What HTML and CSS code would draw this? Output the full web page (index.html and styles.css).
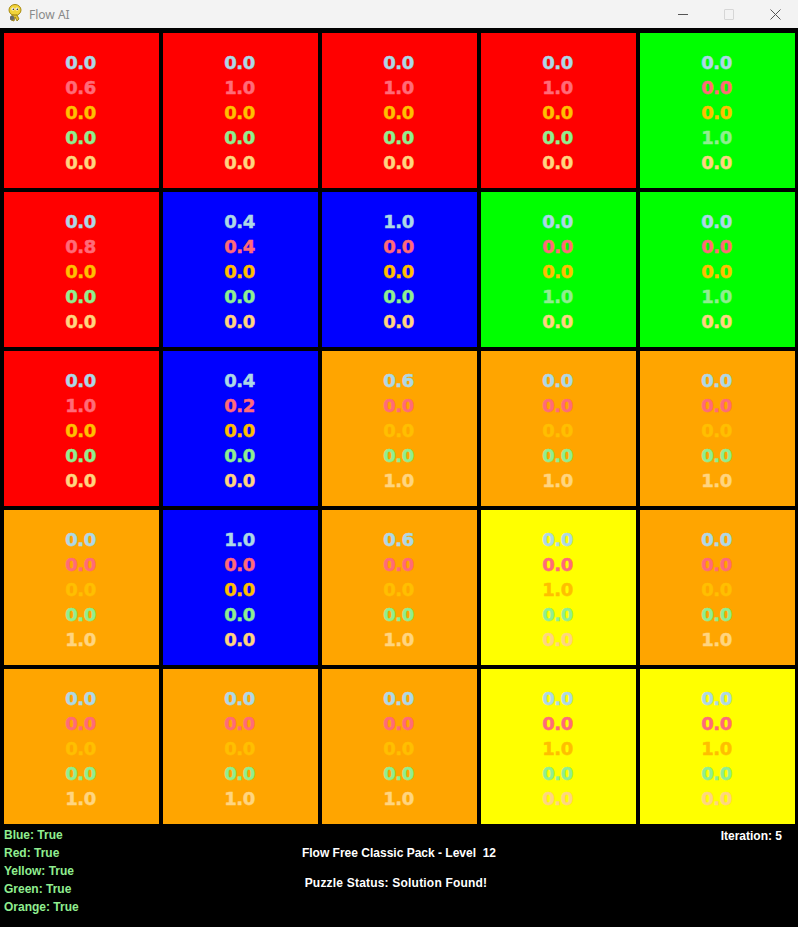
FILE: index.html
```html
<!DOCTYPE html>
<html lang="en">
  <head>
    <meta charset="UTF-8" />
    <meta name="viewport" content="width=device-width, initial-scale=1.0" />
    <title>Flow AI</title>
    <link rel="stylesheet" href="styles.css">
  </head>

  <body>
    <div class="titlebar">
      <svg class="app-icon" width="16" height="18" viewBox="0 0 16 18">
        <ellipse cx="8" cy="6" rx="6" ry="5.5" fill="#f2d33a" stroke="#a88a10" stroke-width="1" />
        <circle cx="6" cy="5" r="1.6" fill="#fff" />
        <circle cx="10" cy="5" r="1.6" fill="#fff" />
        <circle cx="6.3" cy="5.2" r="0.8" fill="#222" />
        <circle cx="10.3" cy="5.2" r="0.8" fill="#222" />
        <path d="M5 11 L4 16 L7 17 L8 13 L10 17 L12 15 L10 11 Z" fill="#e2c12e" stroke="#8a7010" stroke-width="0.8" />
        <rect x="3" y="12" width="4" height="4" rx="1" fill="#6a6a6a" />
      </svg>
      <span class="title">Flow AI</span>
      <div class="controls">
        <span class="ctl min"></span>
        <span class="ctl max"></span>
        <span class="ctl close">
          <svg width="11" height="11" viewBox="0 0 11 11">
            <path d="M0.5 0.5 L10.5 10.5 M10.5 0.5 L0.5 10.5" stroke="#555" stroke-width="1" />
          </svg>
        </span>
      </div>
    </div>

    <div class="board">
      <!-- row 1 -->
      <div class="cell red">
        <span class="c-blue">0.0</span><span class="c-red">0.6</span><span class="c-yellow">0.0</span><span class="c-green">0.0</span><span class="c-orange">0.0</span>
      </div>
      <div class="cell red">
        <span class="c-blue">0.0</span><span class="c-red">1.0</span><span class="c-yellow">0.0</span><span class="c-green">0.0</span><span class="c-orange">0.0</span>
      </div>
      <div class="cell red">
        <span class="c-blue">0.0</span><span class="c-red">1.0</span><span class="c-yellow">0.0</span><span class="c-green">0.0</span><span class="c-orange">0.0</span>
      </div>
      <div class="cell red">
        <span class="c-blue">0.0</span><span class="c-red">1.0</span><span class="c-yellow">0.0</span><span class="c-green">0.0</span><span class="c-orange">0.0</span>
      </div>
      <div class="cell green">
        <span class="c-blue">0.0</span><span class="c-red">0.0</span><span class="c-yellow">0.0</span><span class="c-green">1.0</span><span class="c-orange">0.0</span>
      </div>

      <!-- row 2 -->
      <div class="cell red">
        <span class="c-blue">0.0</span><span class="c-red">0.8</span><span class="c-yellow">0.0</span><span class="c-green">0.0</span><span class="c-orange">0.0</span>
      </div>
      <div class="cell blue">
        <span class="c-blue">0.4</span><span class="c-red">0.4</span><span class="c-yellow">0.0</span><span class="c-green">0.0</span><span class="c-orange">0.0</span>
      </div>
      <div class="cell blue">
        <span class="c-blue">1.0</span><span class="c-red">0.0</span><span class="c-yellow">0.0</span><span class="c-green">0.0</span><span class="c-orange">0.0</span>
      </div>
      <div class="cell green">
        <span class="c-blue">0.0</span><span class="c-red">0.0</span><span class="c-yellow">0.0</span><span class="c-green">1.0</span><span class="c-orange">0.0</span>
      </div>
      <div class="cell green">
        <span class="c-blue">0.0</span><span class="c-red">0.0</span><span class="c-yellow">0.0</span><span class="c-green">1.0</span><span class="c-orange">0.0</span>
      </div>

      <!-- row 3 -->
      <div class="cell red">
        <span class="c-blue">0.0</span><span class="c-red">1.0</span><span class="c-yellow">0.0</span><span class="c-green">0.0</span><span class="c-orange">0.0</span>
      </div>
      <div class="cell blue">
        <span class="c-blue">0.4</span><span class="c-red">0.2</span><span class="c-yellow">0.0</span><span class="c-green">0.0</span><span class="c-orange">0.0</span>
      </div>
      <div class="cell orange">
        <span class="c-blue">0.6</span><span class="c-red">0.0</span><span class="c-yellow">0.0</span><span class="c-green">0.0</span><span class="c-orange">1.0</span>
      </div>
      <div class="cell orange">
        <span class="c-blue">0.0</span><span class="c-red">0.0</span><span class="c-yellow">0.0</span><span class="c-green">0.0</span><span class="c-orange">1.0</span>
      </div>
      <div class="cell orange">
        <span class="c-blue">0.0</span><span class="c-red">0.0</span><span class="c-yellow">0.0</span><span class="c-green">0.0</span><span class="c-orange">1.0</span>
      </div>

      <!-- row 4 -->
      <div class="cell orange">
        <span class="c-blue">0.0</span><span class="c-red">0.0</span><span class="c-yellow">0.0</span><span class="c-green">0.0</span><span class="c-orange">1.0</span>
      </div>
      <div class="cell blue">
        <span class="c-blue">1.0</span><span class="c-red">0.0</span><span class="c-yellow">0.0</span><span class="c-green">0.0</span><span class="c-orange">0.0</span>
      </div>
      <div class="cell orange">
        <span class="c-blue">0.6</span><span class="c-red">0.0</span><span class="c-yellow">0.0</span><span class="c-green">0.0</span><span class="c-orange">1.0</span>
      </div>
      <div class="cell yellow">
        <span class="c-blue">0.0</span><span class="c-red">0.0</span><span class="c-yellow">1.0</span><span class="c-green">0.0</span><span class="c-orange">0.0</span>
      </div>
      <div class="cell orange">
        <span class="c-blue">0.0</span><span class="c-red">0.0</span><span class="c-yellow">0.0</span><span class="c-green">0.0</span><span class="c-orange">1.0</span>
      </div>

      <!-- row 5 -->
      <div class="cell orange">
        <span class="c-blue">0.0</span><span class="c-red">0.0</span><span class="c-yellow">0.0</span><span class="c-green">0.0</span><span class="c-orange">1.0</span>
      </div>
      <div class="cell orange">
        <span class="c-blue">0.0</span><span class="c-red">0.0</span><span class="c-yellow">0.0</span><span class="c-green">0.0</span><span class="c-orange">1.0</span>
      </div>
      <div class="cell orange">
        <span class="c-blue">0.0</span><span class="c-red">0.0</span><span class="c-yellow">0.0</span><span class="c-green">0.0</span><span class="c-orange">1.0</span>
      </div>
      <div class="cell yellow">
        <span class="c-blue">0.0</span><span class="c-red">0.0</span><span class="c-yellow">1.0</span><span class="c-green">0.0</span><span class="c-orange">0.0</span>
      </div>
      <div class="cell yellow">
        <span class="c-blue">0.0</span><span class="c-red">0.0</span><span class="c-yellow">1.0</span><span class="c-green">0.0</span><span class="c-orange">0.0</span>
      </div>
    </div>

    <div class="footer">
      <ul class="flows">
        <li>Blue: True</li>
        <li>Red: True</li>
        <li>Yellow: True</li>
        <li>Green: True</li>
        <li>Orange: True</li>
      </ul>
      <div class="status">
        <p>Flow Free Classic Pack - Level&nbsp; 12</p>
        <p class="solved">Puzzle Status: Solution Found!</p>
      </div>
      <div class="iteration">Iteration: 5</div>
    </div>
  </body>
</html>
```

FILE: styles.css
```css
body {
  margin: 0;
  padding: 0;
  background-color: #000;
  font-family: "Liberation Sans", Arial, sans-serif;
  width: 798px;
  height: 927px;
  overflow: hidden;
}

.titlebar {
  height: 28px;
  background-color: #f3f3f3;
  display: flex;
  align-items: center;
}

.app-icon {
  margin-left: 7px;
  margin-top: -2px;
}

.title {
  margin-left: 6px;
  font-family: "Noto Sans", sans-serif;
  font-size: 12px;
  color: #8a8a8a;
}

.controls {
  margin-left: auto;
  display: flex;
  align-items: center;
  height: 100%;
}

.ctl {
  width: 46px;
  height: 28px;
  display: flex;
  align-items: center;
  justify-content: center;
}

.ctl.min::before {
  content: "";
  width: 10px;
  height: 1px;
  background-color: #555;
}

.ctl.max::before {
  content: "";
  width: 8px;
  height: 9px;
  border: 1px solid #d6d6d6;
  border-radius: 1px;
}

.board {
  display: grid;
  grid-template-columns: repeat(5, 155px);
  grid-template-rows: repeat(5, 155px);
  gap: 4px;
  padding: 5px 3px 0 4px;
}

.cell {
  display: flex;
  flex-direction: column;
  align-items: center;
  padding-top: 17px;
  padding-right: 2px;
  box-sizing: border-box;
  font-family: "DejaVu Sans", sans-serif;
  font-weight: bold;
  font-size: 18px;
  line-height: 25px;
  letter-spacing: -0.5px;
  -webkit-text-stroke: 0.5px currentColor;
}

.red { background-color: #ff0000; }
.green { background-color: #00ff00; }
.blue { background-color: #0000ff; }
.orange { background-color: #ffa500; }
.yellow { background-color: #ffff00; }

.c-blue { color: #add8e6; }
.c-red { color: #ff6b78; }
.c-yellow { color: #ffbf00; }
.c-green { color: #90ee90; }
.c-orange { color: #ffd580; }

.footer {
  height: 103px;
  display: grid;
  grid-template-columns: 1fr auto 1fr;
  font-weight: bold;
  font-size: 12px;
  line-height: 18px;
}

.flows {
  list-style: none;
  margin: 0;
  padding: 2px 0 0 4px;
  color: #90ee90;
}

.status {
  color: #fff;
  text-align: center;
  padding-top: 20px;
}

.status p {
  margin: 0 0 12px 0;
}

.status .solved {
  letter-spacing: 0.2px;
  margin-right: 6px;
}

.iteration {
  color: #fff;
  text-align: right;
  padding: 3px 16px 0 0;
}
```
